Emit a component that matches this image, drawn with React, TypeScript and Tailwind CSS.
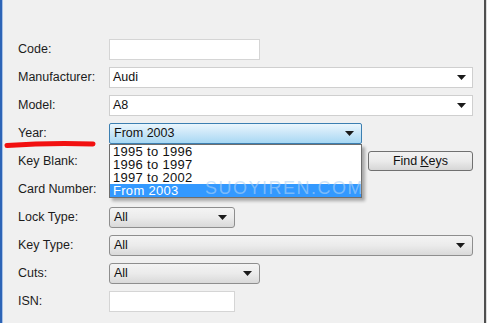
import React from "react";

function Arrow() {
  return (
    <svg width="9" height="5" viewBox="0 0 9 5" className="shrink-0">
      <path d="M0 0h9L4.5 5z" fill="#1a1a1a" />
    </svg>
  );
}

function TextBox({ w, value }: { w: string; value?: string }) {
  return (
    <div className={`${w} h-[21px] bg-white border border-[#d5d5d5] flex items-center px-[3px] text-[12.5px] text-[#111]`}>
      {value}
    </div>
  );
}

function WhiteCombo({ value }: { value: string }) {
  return (
    <div className="flex-1 h-[21px] bg-white border border-[#cfcfcf] flex items-center pl-[3px] pr-[6px] text-[12.5px] text-[#111]">
      <span className="flex-1">{value}</span>
      <Arrow />
    </div>
  );
}

function GrayCombo({ w, value }: { w: string; value: string }) {
  return (
    <div
      className={`${w} h-[21px] rounded-[3px] border border-[#8e8e8e] bg-gradient-to-b from-[#f4f4f4] via-[#ebebeb] to-[#d9d9d9] flex items-center pl-[4px] pr-[7px] text-[12.5px] text-[#111]`}
    >
      <span className="flex-1">{value}</span>
      <Arrow />
    </div>
  );
}

function Row({ label, children }: { label: string; children?: React.ReactNode }) {
  return (
    <div className="flex items-center h-[28px]">
      <div className="w-[91px] shrink-0 text-[12.5px] text-[#1c1c1c]">{label}</div>
      {children}
    </div>
  );
}

export default function App() {
  const years = ["1995 to 1996", "1996 to 1997", "1997 to 2002", "From 2003"];
  return (
    <div className="relative w-[487px] h-[323px] bg-[#f0f0f0] flex overflow-hidden font-['Liberation_Sans',Arial,sans-serif]">
      <div className="w-[2px] bg-[#2d64b6]" />
      <div className="w-px bg-[#a9c2e6]" />
      <div className="flex-1 pl-[15px] pr-[11px] pt-[35px]">
        <Row label="Code:">
          <TextBox w="w-[151px]" />
        </Row>
        <Row label="Manufacturer:">
          <WhiteCombo value="Audi" />
        </Row>
        <Row label="Model:">
          <WhiteCombo value="A8" />
        </Row>
        <Row label="Year:">
          <div className="relative w-[253px]">
            <div className="h-[21px] rounded-[2px] border border-[#3c7fb1] bg-gradient-to-b from-[#eaf6fd] via-[#c9e6f8] to-[#a7d8f3] flex items-center pl-[4px] pr-[7px] text-[12.5px] text-[#111]">
              <span className="flex-1">From 2003</span>
              <Arrow />
            </div>
            <div className="absolute left-0 top-[21px] w-[253px] z-10 bg-white border border-[#6e6e6e] shadow-[3px_3px_3px_rgba(0,0,0,0.3)] text-[13px] text-[#111]">
              {years.map((y) => (
                <div
                  key={y}
                  className={`h-[13px] leading-[13px] pl-[3px] tracking-[0.3px] ${y === "From 2003" ? "bg-[#3399ff] text-white" : ""}`}
                >
                  {y}
                </div>
              ))}
              <div className="absolute left-[95px] top-[33px] text-[18px] leading-[20px] tracking-[1.5px] text-[rgba(175,210,245,0.6)] pointer-events-none">
                SUOYIREN.COM
              </div>
            </div>
          </div>
        </Row>
        <Row label="Key Blank:">
          <div className="flex-1" />
          <div className="w-[105px] h-[20px] rounded-[3px] border border-[#707070] bg-gradient-to-b from-[#f2f2f2] via-[#ebebeb] to-[#d6d6d6] flex items-center justify-center text-[12.5px] text-[#111]">
            Find <span className="underline ml-[3px]">K</span>eys
          </div>
        </Row>
        <Row label="Card Number:" />
        <Row label="Lock Type:">
          <GrayCombo w="w-[126px]" value="All" />
        </Row>
        <Row label="Key Type:">
          <GrayCombo w="flex-1" value="All" />
        </Row>
        <Row label="Cuts:">
          <GrayCombo w="w-[151px]" value="All" />
        </Row>
        <Row label="ISN:">
          <TextBox w="w-[126px]" />
        </Row>
      </div>
      <div className="w-[2px] bg-[#4f4f4f]" />
      <div className="w-px bg-[#dcdcdc]" />
      <svg className="absolute left-0 top-[138px]" width="100" height="12" viewBox="0 0 100 12">
        <path d="M7 7.5 Q50 4.5 93 6" stroke="#f21010" strokeWidth="5" strokeLinecap="round" fill="none" />
      </svg>
    </div>
  );
}
